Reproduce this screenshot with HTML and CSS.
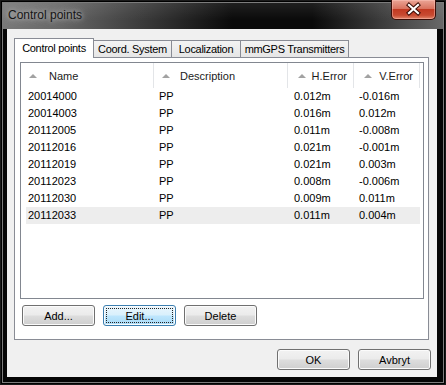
FILE: index.html
```html
<!DOCTYPE html>
<html lang="en">
<head>
    <meta charset="UTF-8">
    <meta name="viewport" content="width=device-width, initial-scale=1.0">
    <title>Control points</title>
    <link rel="stylesheet" href="styles.css">
</head>
<body>
    <div class="window">
        <div class="titlebar">
            <span class="title">Control points</span>
            <button class="close-btn">
                <svg width="43" height="19" viewBox="0 0 43 19">
                    <path d="M17 5 L26 13 M26 5 L17 13" stroke="#3b0c05" stroke-width="4.2" stroke-linecap="square"/>
                    <path d="M17 5 L26 13 M26 5 L17 13" stroke="#fff" stroke-width="2.2" stroke-linecap="square"/>
                </svg>
            </button>
        </div>
        <div class="client">
            <div class="tabs">
                <div class="tab active tab-points">Control points</div>
                <div class="tab tab-coord">Coord. System</div>
                <div class="tab tab-local">Localization</div>
                <div class="tab tab-gps">mmGPS Transmitters</div>
            </div>
            <div class="tab-panel">
                <div class="list">
                    <div class="list-header">
                        <div class="col-head"><span class="sort-arrow"></span><span class="head-name">Name</span></div>
                        <div class="col-head"><span class="sort-arrow"></span><span class="head-desc">Description</span></div>
                        <div class="col-head num"><span class="sort-arrow"></span><span>H.Error</span></div>
                        <div class="col-head num"><span class="sort-arrow"></span><span>V.Error</span></div>
                    </div>
                    <div class="list-body">
                        <div class="row"><span>20014000</span><span>PP</span><span>0.012m</span><span>-0.016m</span></div>
                        <div class="row"><span>20014003</span><span>PP</span><span>0.016m</span><span>0.012m</span></div>
                        <div class="row"><span>20112005</span><span>PP</span><span>0.011m</span><span>-0.008m</span></div>
                        <div class="row"><span>20112016</span><span>PP</span><span>0.021m</span><span>-0.001m</span></div>
                        <div class="row"><span>20112019</span><span>PP</span><span>0.021m</span><span>0.003m</span></div>
                        <div class="row"><span>20112023</span><span>PP</span><span>0.008m</span><span>-0.006m</span></div>
                        <div class="row"><span>20112030</span><span>PP</span><span>0.009m</span><span>0.011m</span></div>
                        <div class="row selected"><span>20112033</span><span>PP</span><span>0.011m</span><span>0.004m</span></div>
                    </div>
                </div>
                <div class="list-buttons">
                    <button class="btn">Add...</button>
                    <button class="btn btn-default">Edit...</button>
                    <button class="btn">Delete</button>
                </div>
            </div>
            <div class="dialog-buttons">
                <button class="btn">OK</button>
                <button class="btn">Avbryt</button>
            </div>
        </div>
    </div>
</body>
</html>
```

FILE: styles.css
```css
body {
    margin: 0;
    padding: 0;
    background-color: #000;
    font-family: "Liberation Sans", Arial, sans-serif;
    font-size: 11px;
    color: #000;
}

.window {
    width: 446px;
    height: 385px;
    box-sizing: border-box;
    padding: 0 9px 8px 7px;
    display: flex;
    flex-direction: column;
    background:
        linear-gradient(rgba(255, 255, 255, 0.1), rgba(255, 255, 255, 0) 70%) top / 100% 29px no-repeat,
        linear-gradient(90deg, #7a7a7a 0%, #666 14%, #2c2c2c 38%, #0a0a0a 52%, #0a0a0a 70%, #4a4a4a 90%, #6a6a6a 100%) top / 100% 29px no-repeat,
        #050505;
    box-shadow: inset 0 0 0 1px #1a1a1a, inset 0 0 0 2px #000, inset 0 0 0 3px #7c7c7c;
}

.titlebar {
    height: 29px;
    margin: 0 -9px 0 -7px;
    display: flex;
    justify-content: space-between;
    align-items: flex-start;
}

.title {
    margin: 8px 0 0 8px;
    font-size: 12px;
    line-height: 14px;
    color: #151515;
    text-shadow: 0 0 5px rgba(220, 220, 220, 0.9), 0 0 10px rgba(190, 190, 190, 0.7);
}

.close-btn {
    width: 45px;
    height: 20px;
    margin-right: 10px;
    padding: 0;
    border: 1px solid #3a0d07;
    border-top: none;
    border-radius: 0 0 5px 5px;
    background: linear-gradient(#eba596 0%, #d9735f 45%, #c23a22 50%, #c84a31 80%, #e2866a 100%);
    box-shadow: inset 0 0 0 1px rgba(255, 200, 190, 0.45);
    display: flex;
    align-items: center;
    justify-content: center;
}

.client {
    flex: 1;
    background-color: #f0f0f0;
    padding: 9px 6px 7px 7px;
    display: flex;
    flex-direction: column;
}

/* tab strip */
.tabs {
    height: 19px;
    display: flex;
    align-items: flex-end;
}

.tab {
    box-sizing: border-box;
    height: 17px;
    line-height: 16px;
    text-align: center;
    white-space: nowrap;
    letter-spacing: -0.3px;
    border-top: 1px solid #898c95;
    border-right: 1px solid #898c95;
    background: linear-gradient(#f3f3f3, #e6e6e6);
}

.tab.active {
    height: 20px;
    line-height: 19px;
    margin-bottom: -1px;
    border-left: 1px solid #898c95;
    background: #fff;
    position: relative;
    z-index: 1;
}

.tab-points { width: 80px; }
.tab-coord { width: 78px; }
.tab-local { width: 69px; }
.tab-gps { width: 108px; }

.tab-panel {
    box-sizing: border-box;
    height: 283px;
    margin-right: 2px;
    padding: 4px 4px 0 5px;
    border: 1px solid #898c95;
    background-color: #fff;
}

/* list view */
.list {
    box-sizing: border-box;
    height: 237px;
    border: 1px solid #828790;
    background-color: #fff;
}

.list-header {
    height: 25px;
    display: grid;
    grid-template-columns: 133px 134px 66px 66px;
}

.col-head {
    display: flex;
    align-items: center;
    padding-left: 8px;
    border-right: 1px solid #e3e5e8;
    color: #1b1b1b;
}

.col-head.num {
    justify-content: space-between;
    padding-left: 10px;
    padding-right: 6px;
}

.sort-arrow {
    width: 0;
    height: 0;
    border-left: 4px solid transparent;
    border-right: 4px solid transparent;
    border-bottom: 4px solid #a2a2a2;
}

.head-name { margin-left: 12px; }
.head-desc { margin-left: 10px; }

.row {
    height: 17px;
    line-height: 17px;
    margin-left: 5px;
    width: 394px;
    display: grid;
    grid-template-columns: 128px 134px 66px 66px;
}

.row span:nth-child(1) { padding-left: 2px; }
.row span:nth-child(2) { padding-left: 5px; }
.row span:nth-child(3) { padding-left: 6px; }
.row span:nth-child(4) { padding-left: 5px; }

.row.selected {
    background-color: #ededed;
}

/* buttons */
.list-buttons {
    display: flex;
    gap: 8px;
    margin: 6px 0 0 2px;
}

.dialog-buttons {
    display: flex;
    justify-content: flex-end;
    gap: 8px;
    margin-top: 9px;
}

.btn {
    width: 73px;
    height: 21px;
    padding: 0;
    font-family: "Liberation Sans", Arial, sans-serif;
    font-size: 11px;
    color: #000;
    border: 1px solid #707070;
    border-radius: 3px;
    background: linear-gradient(#f2f2f2 0%, #ebebeb 48%, #dddddd 52%, #cfcfcf 100%);
    box-shadow: inset 0 0 0 1px #fbfbfb;
}

.btn-default {
    border-color: #3c7fb1;
    background: linear-gradient(#eaf6fd 0%, #d9f0fc 48%, #bee6fd 52%, #a7d9f5 100%);
    outline: 1px dotted #222;
    outline-offset: -4px;
}
```
